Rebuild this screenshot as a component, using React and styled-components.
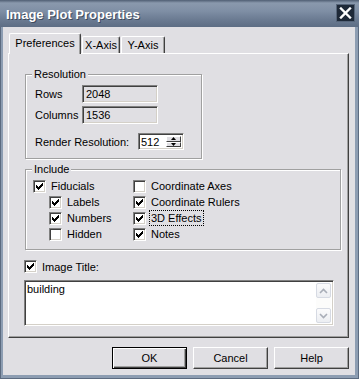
import React from "react";
import styled, { createGlobalStyle } from "styled-components";

const GlobalStyle = createGlobalStyle`
  html, body {
    margin: 0;
    padding: 0;
    background: #fff;
  }
  body {
    font-family: "Liberation Sans", Arial, sans-serif;
    font-size: 11px;
    color: #000;
  }
`;

const CheckMark = () => (
  <svg width="7" height="7" viewBox="0 0 7 7" shapeRendering="crispEdges">
    <path
      fill="#000"
      d="M6 0h1v1h-1z M5 1h2v1h-2z M0 2h1v1h-1z M4 2h3v1h-3z M0 3h2v1h-2z M3 3h3v1h-3z M0 4h5v1h-5z M1 5h3v1h-3z M2 6h1v1h-1z"
    />
  </svg>
);

const Checkbox = ({ checked, label, focused, indent }) => (
  <CheckRow $indent={indent}>
    <Box>{checked && <CheckMark />}</Box>
    {label && <CheckLabel $focused={focused}>{label}</CheckLabel>}
  </CheckRow>
);

const leftColumn = [
  { label: "Fiducials", checked: true },
  { label: "Labels", checked: true, indent: true },
  { label: "Numbers", checked: true, indent: true },
  { label: "Hidden", checked: false, indent: true },
];

const rightColumn = [
  { label: "Coordinate Axes", checked: false },
  { label: "Coordinate Rulers", checked: true },
  { label: "3D Effects", checked: true, focused: true },
  { label: "Notes", checked: true },
];

const App = () => {
  const includeItems = [];
  leftColumn.forEach((item, i) => {
    includeItems.push(<Checkbox key={"l" + i} {...item} />);
    includeItems.push(<Checkbox key={"r" + i} {...rightColumn[i]} />);
  });

  return (
    <>
      <GlobalStyle />
      <Window>
        <TitleBar>
          <Title>Image Plot Properties</Title>
          <CloseButton>
            <svg width="13" height="12" viewBox="0 0 13 12">
              <path
                d="M2 1.5 L11 10.5 M11 1.5 L2 10.5"
                stroke="#fff"
                strokeWidth="2.4"
                strokeLinecap="square"
              />
            </svg>
          </CloseButton>
        </TitleBar>

        <Client>
          <TabStrip>
            <Tab $active $width={72}>Preferences</Tab>
            <Tab $width={38}>X-Axis</Tab>
            <Tab $width={44}>Y-Axis</Tab>
          </TabStrip>

          <TabPanel>
            <GroupBox $width={177} $height={85}>
              <Caption>Resolution</Caption>
              <FieldRow>
                <FieldLabel>Rows</FieldLabel>
                <ReadField>2048</ReadField>
              </FieldRow>
              <FieldRow>
                <FieldLabel>Columns</FieldLabel>
                <ReadField>1536</ReadField>
              </FieldRow>
              <RenderRow>
                <RenderLabel>Render Resolution:</RenderLabel>
                <Spinner>
                  <SpinValue>512</SpinValue>
                  <SpinButtons>
                    <SpinButton>
                      <svg width="5" height="3" viewBox="0 0 5 3">
                        <path d="M2.5 0 L5 3 L0 3 Z" fill="#000" />
                      </svg>
                    </SpinButton>
                    <SpinButton>
                      <svg width="5" height="3" viewBox="0 0 5 3">
                        <path d="M0 0 L5 0 L2.5 3 Z" fill="#000" />
                      </svg>
                    </SpinButton>
                  </SpinButtons>
                </Spinner>
              </RenderRow>
            </GroupBox>

            <GroupBox $width={316} $height={81} $top={10}>
              <Caption>Include</Caption>
              <IncludeGrid>{includeItems}</IncludeGrid>
            </GroupBox>

            <TitleCheck>
              <Checkbox checked label="Image Title:" />
            </TitleCheck>

            <TextArea>
              <TextContent>building</TextContent>
              <ScrollBar>
                <ScrollArrow>
                  <svg width="9" height="6" viewBox="0 0 9 6">
                    <path d="M1 5 L4.5 1.5 L8 5" stroke="#a9aeb8" strokeWidth="1.6" fill="none" />
                  </svg>
                </ScrollArrow>
                <ScrollArrow>
                  <svg width="9" height="6" viewBox="0 0 9 6">
                    <path d="M1 1 L4.5 4.5 L8 1" stroke="#a9aeb8" strokeWidth="1.6" fill="none" />
                  </svg>
                </ScrollArrow>
              </ScrollBar>
            </TextArea>
          </TabPanel>

          <ButtonRow>
            <Button $default>OK</Button>
            <Button>Cancel</Button>
            <Button>Help</Button>
          </ButtonRow>
        </Client>
      </Window>
    </>
  );
};

export default App;

const Window = styled.div`
  width: 359px;
  height: 379px;
  box-sizing: border-box;
  display: flex;
  flex-direction: column;
  background: #8d9db2;
  border: 1px solid #5c6b80;
  border-top: 0;
`;

const TitleBar = styled.div`
  height: 27px;
  flex: none;
  box-sizing: border-box;
  display: flex;
  align-items: center;
  justify-content: space-between;
  padding: 2px 4px 0 6px;
  margin: 0 -1px;
  background: linear-gradient(
    to bottom,
    #4f5e73 0px,
    #8a99ad 3px,
    #7f8fa5 11px,
    #6c7c93 19px,
    #5d6d84 27px
  );
`;

const Title = styled.div`
  color: #fff;
  font-weight: bold;
  font-size: 13px;
  text-shadow: 1px 1px 0 #3e4b5e;
`;

const CloseButton = styled.div`
  width: 19px;
  height: 18px;
  margin-top: -3px;
  box-sizing: border-box;
  display: flex;
  align-items: center;
  justify-content: center;
  background: #1e2938;
  border: 1px solid #56657a;
`;

const Client = styled.div`
  flex: 1;
  margin: 0 3px 3px 2px;
  background: #e0dfe3;
  padding: 6px 6px 0 5px;
  display: flex;
  flex-direction: column;
`;

const TabStrip = styled.div`
  height: 20px;
  display: flex;
  align-items: flex-end;
  position: relative;
  z-index: 1;
`;

const Tab = styled.div`
  width: ${(p) => p.$width}px;
  height: ${(p) => (p.$active ? 21 : 17)}px;
  margin-left: 1px;
  margin-bottom: ${(p) => (p.$active ? -1 : 0)}px;
  box-sizing: border-box;
  display: flex;
  align-items: center;
  justify-content: center;
  padding-bottom: ${(p) => (p.$active ? 3 : 1)}px;
  background: #e0dfe3;
  border-top: 1px solid #fff;
  border-left: 1px solid #fff;
  border-right: 1px solid #404040;
  border-radius: 2px 2px 0 0;
  box-shadow: inset -1px 0 0 #a0a0a0;
`;

const TabPanel = styled.div`
  width: 341px;
  height: 285px;
  box-sizing: border-box;
  border: 1px solid;
  border-color: #fff #404040 #404040 #fff;
  box-shadow: inset -1px -1px 0 #a0a0a0;
  padding: 20px 0 0 16px;
  display: flex;
  flex-direction: column;
`;

const GroupBox = styled.div`
  position: relative;
  width: ${(p) => p.$width}px;
  height: ${(p) => p.$height}px;
  margin-top: ${(p) => p.$top || 0}px;
  box-sizing: border-box;
  border: 1px solid #a0a0a0;
  box-shadow: inset 1px 1px 0 #fff, 1px 1px 0 #fff;
  padding: 10px 0 0 9px;
`;

const Caption = styled.span`
  position: absolute;
  top: -7px;
  left: 6px;
  padding: 0 2px;
  line-height: 13px;
  background: #e0dfe3;
`;

const FieldRow = styled.div`
  display: flex;
  align-items: center;
  height: 18px;
  margin-bottom: 3px;
`;

const FieldLabel = styled.span`
  width: 47px;
`;

const sunken = `
  border: 1px solid;
  border-color: #808080 #fff #fff #808080;
  box-shadow: inset 1px 1px 0 #404040, inset -1px -1px 0 #d4d0c8;
`;

const ReadField = styled.div`
  width: 76px;
  height: 18px;
  box-sizing: border-box;
  ${sunken}
  padding: 2px 0 0 3px;
  line-height: 13px;
`;

const RenderRow = styled.div`
  display: flex;
  align-items: center;
  margin-top: 9px;
  height: 17px;
`;

const RenderLabel = styled.span`
  width: 103px;
`;

const Spinner = styled.div`
  width: 46px;
  height: 17px;
  box-sizing: border-box;
  ${sunken}
  background: #fff;
  display: flex;
  padding: 2px;
`;

const SpinValue = styled.div`
  flex: 1;
  line-height: 13px;
`;

const SpinButtons = styled.div`
  width: 15px;
  display: flex;
  flex-direction: column;
`;

const SpinButton = styled.div`
  flex: 1;
  box-sizing: border-box;
  display: flex;
  align-items: center;
  justify-content: center;
  background: #e0dfe3;
  border: 1px solid;
  border-color: #fff #404040 #404040 #fff;
`;

const IncludeGrid = styled.div`
  display: grid;
  grid-template-columns: 100px 1fr;
  grid-auto-rows: 16px;
  margin: -2px 0 0 -2px;
`;

const CheckRow = styled.div`
  display: flex;
  align-items: center;
  gap: 4px;
  padding-left: ${(p) => (p.$indent ? 16 : 0)}px;
`;

const Box = styled.span`
  width: 13px;
  height: 13px;
  flex: none;
  box-sizing: border-box;
  background: #fff;
  border: 1px solid;
  border-color: #808080 #fff #fff #808080;
  box-shadow: inset 1px 1px 0 #404040, inset -1px -1px 0 #d4d0c8;
  display: flex;
  align-items: center;
  justify-content: center;
`;

const CheckLabel = styled.span`
  line-height: 14px;
  padding: 0 1px;
  margin-left: -1px;
  border: 1px dotted ${(p) => (p.$focused ? "#000" : "transparent")};
`;

const TitleCheck = styled.div`
  margin: 10px 0 0 -1px;
  height: 13px;
  display: flex;
  align-items: center;
`;

const TextArea = styled.div`
  width: 310px;
  height: 46px;
  margin: 7px 0 0 -1px;
  box-sizing: border-box;
  ${sunken}
  background: #fff;
  display: flex;
  padding: 2px;
`;

const TextContent = styled.div`
  flex: 1;
  line-height: 13px;
`;

const ScrollBar = styled.div`
  width: 15px;
  display: flex;
  flex-direction: column;
  justify-content: space-between;
  background: #fcfcfb;
`;

const ScrollArrow = styled.div`
  height: 15px;
  box-sizing: border-box;
  display: flex;
  align-items: center;
  justify-content: center;
  border: 1px solid #d6dae3;
  border-radius: 2px;
  background: linear-gradient(to bottom, #fbfbfc, #eceef2);
`;

const ButtonRow = styled.div`
  display: flex;
  justify-content: flex-end;
  gap: 6px;
  margin-top: 9px;
`;

const Button = styled.div`
  width: 75px;
  height: 22px;
  box-sizing: border-box;
  display: flex;
  align-items: center;
  justify-content: center;
  background: #e0dfe3;
  border: 1px solid;
  border-color: #fff #404040 #404040 #fff;
  box-shadow: inset -1px -1px 0 #a0a0a0;
  ${(p) =>
    p.$default &&
    `
    border: 1px solid #000;
    box-shadow: inset 1px 1px 0 #fff, inset -1px -1px 0 #404040, inset -2px -2px 0 #a0a0a0;
  `}
`;
